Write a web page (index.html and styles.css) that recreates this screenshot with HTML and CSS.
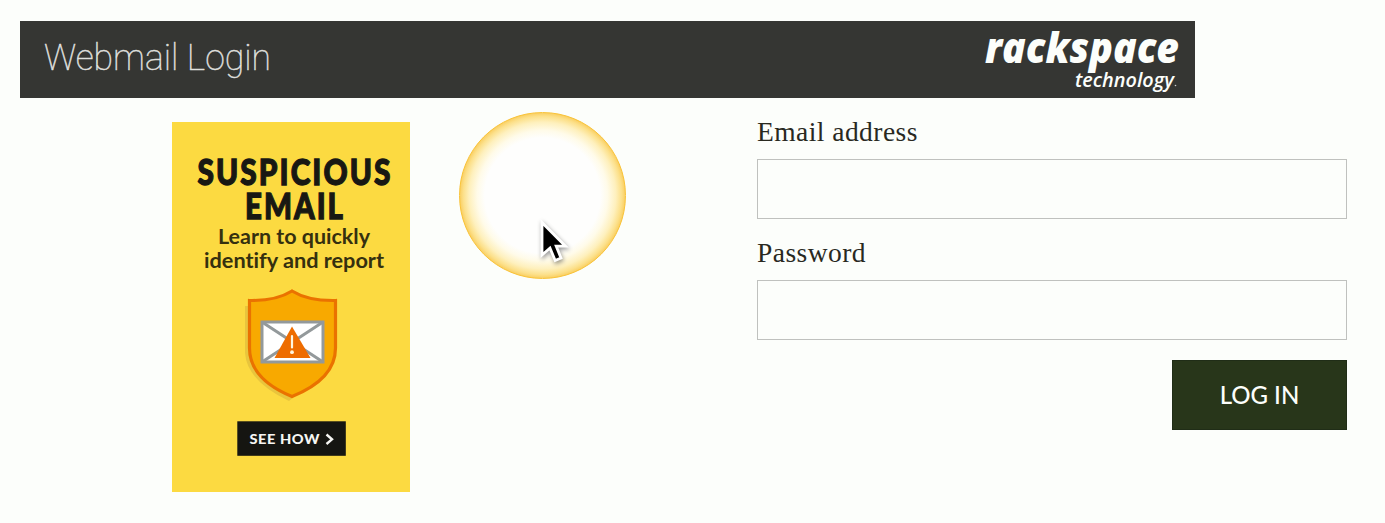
FILE: index.html
```html
<!DOCTYPE html>
<html lang="en">
<head>
<meta charset="utf-8">
<title>Webmail Login</title>
<link rel="stylesheet" href="styles.css">
</head>
<body>
<header class="topbar">
  <svg class="title" width="290" height="77" role="heading" aria-level="1">
    <text x="24" y="49" textLength="227" lengthAdjust="spacingAndGlyphs">Webmail Login</text>
  </svg>
  <svg class="logo" width="215" height="77">
    <text class="logo-name" x="5" y="42" textLength="194" lengthAdjust="spacingAndGlyphs">rackspace</text>
    <text class="logo-sub" x="95" y="65.500" textLength="99" lengthAdjust="spacingAndGlyphs">technology</text>
    <circle cx="195.500" cy="64.500" r=".8" fill="#ccc"/>
  </svg>
</header>
<main class="content">
  <a class="promo">
    <svg width="238" height="370" viewBox="0 0 238 370">
      <g class="promo-title">
        <text x="25.500" y="62.500" textLength="195" lengthAdjust="spacingAndGlyphs">SUSPICIOUS</text>
        <text x="73" y="97" textLength="100" lengthAdjust="spacingAndGlyphs">EMAIL</text>
      </g>
      <g class="promo-copy">
        <text x="46" y="121.500" textLength="152" lengthAdjust="spacingAndGlyphs">Learn to quickly</text>
        <text x="32" y="145.500" textLength="180" lengthAdjust="spacingAndGlyphs">identify and report</text>
      </g>
      <path class="shield-shadow" d="M73 184V231Q75 259 117 279L140 260V184Z"/>
      <path class="shield" d="M120 169Q136 179 163.500 178.500V226Q163.500 257 120 274.500Q77.500 257 77.500 226V178.500Q104 179 120 169Z"/>
      <g class="envelope">
        <rect x="90" y="200" width="61" height="40"/>
        <path d="M90 200L151 240M151 200L90 240"/>
      </g>
      <path d="M120 204.500L138.500 236H102.500Z" fill="#ee6c00"/>
      <path d="M120 214V225.500" stroke="#fff6df" stroke-width="2.200" stroke-linecap="round"/>
      <circle cx="120" cy="230.200" r="1.900" fill="#fff6df"/>
      <rect x="65.300" y="299.300" width="108.500" height="34.500" fill="#151511"/>
      <text class="promo-action" x="77.500" y="322" textLength="70.500" lengthAdjust="spacingAndGlyphs">SEE HOW</text>
      <path d="M154.500 312.500L160 317.300L154.500 322" fill="none" stroke="#f6f6f3" stroke-width="2.400"/>
    </svg>
  </a>
  <form class="login">
    <label for="email">Email address</label>
    <input id="email" type="email">
    <label for="password">Password</label>
    <input id="password" type="password">
    <button type="button">LOG IN</button>
  </form>
</main>
<div class="spotlight"></div>
<svg class="cursor" width="34" height="50" viewBox="0 0 34 50">
  <path d="M3 4.500V37L11 30L16.200 42.500L22 40L17.200 28.200H26.500Z"/>
</svg>
</body>
</html>
```
FILE: styles.css
```css
* { box-sizing: border-box; }
body {
  margin: 0;
  height: 523px;
  overflow: hidden;
  padding: 21px 38px 0 20px;
  background: #fcfefb;
  color: #29291f;
}
svg { display: block; overflow: visible; }
.topbar {
  display: flex;
  justify-content: space-between;
  width: 1175px;
  height: 77px;
  background: #353633;
}
.title text { font: 100 36.500px Roboto, sans-serif; fill: #dedfdc; stroke: #dedfdc; stroke-width: .5; }
.logo { fill: #fcfefb; }
.logo-name { font: italic 800 43px "Open Sans", sans-serif; }
.logo-sub { font: italic 600 19.500px "Open Sans", sans-serif; }
.content {
  display: flex;
  justify-content: space-between;
  padding-left: 152px;
}
.promo { width: 238px; height: 370px; margin-top: 24px; background: #fcda41; }
.promo-title {
  font: 900 36px Lato, sans-serif;
  letter-spacing: 2.500px;
  fill: #181813;
  stroke: #181813;
  stroke-width: 1.300;
}
.promo-copy { font: 700 20.500px Lato, sans-serif; font-variant-ligatures: none; fill: #35300f; }
.promo-action { font: 900 13.800px Lato, sans-serif; letter-spacing: .5px; fill: #f6f6f3; }
.shield-shadow { fill: #e8c53d; }
.shield { fill: #f8a900; stroke: #ea7200; stroke-width: 3.200; }
.envelope { fill: #fff; stroke: #93999b; stroke-width: 3; }
.login { display: flex; flex-direction: column; width: 590px; padding-top: 15px; }
label {
  height: 46px;
  font: 27.500px/38px "Liberation Serif", serif;
  letter-spacing: .45px;
}
input {
  height: 60px;
  margin-bottom: 15px;
  padding: 0 16px;
  border: 1px solid #bfc1be;
  border-radius: 0;
  background: transparent;
  font-size: 24px;
}
button {
  align-self: flex-end;
  width: 175px;
  height: 70px;
  margin-top: 5px;
  padding: 0 0 2px;
  border: 1px solid #202d17;
  background: #28361a;
  color: #fcfefb;
  font: 500 24px Lato, sans-serif;
}
.spotlight {
  position: absolute;
  left: 459px;
  top: 112px;
  width: 167px;
  height: 167px;
  border: 1.500px solid #f9c338;
  border-radius: 50%;
  background: radial-gradient(circle closest-side, #fefefd 70%, #fffbe9 79%, #fef0bd 89%, #fce08a 96%, #fad065 100%);
}
.cursor {
  position: absolute;
  left: 539px;
  top: 218px;
  fill: #000;
  stroke: #fff;
  stroke-width: 2.800;
  filter: drop-shadow(1px 2px 2px #0006);
}
```
